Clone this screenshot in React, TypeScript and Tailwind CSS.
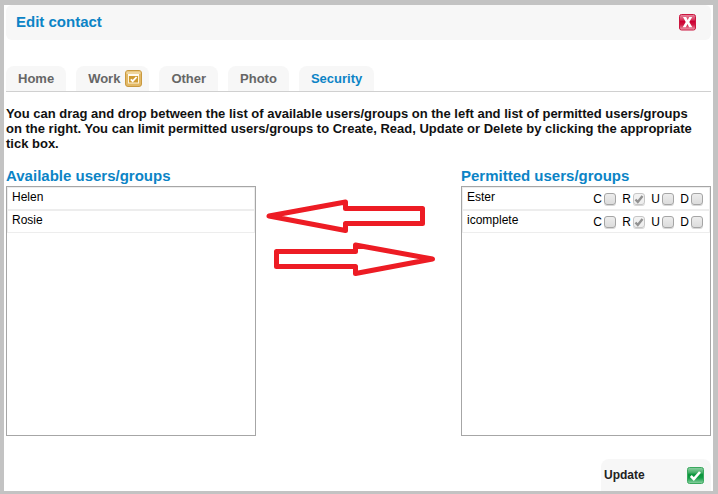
import { useState } from 'react';

const tabs = ['Home', 'Work', 'Other', 'Photo', 'Security'];

const availableUsers = ['Helen', 'Rosie'];

const permittedUsers = ['Ester', 'icomplete'];

const permissions = [
  { key: 'C', label: 'Create' },
  { key: 'R', label: 'Read' },
  { key: 'U', label: 'Update' },
  { key: 'D', label: 'Delete' },
];

function CloseIcon() {
  return (
    <svg width="17" height="17" viewBox="0 0 17 17" className="block" aria-hidden="true">
      <defs>
        <linearGradient id="close-fill" x1="0" y1="0" x2="0" y2="1">
          <stop offset="0" stopColor="#e58aa0" />
          <stop offset="0.3" stopColor="#dc4468" />
          <stop offset="0.45" stopColor="#cc0033" />
          <stop offset="0.65" stopColor="#d21541" />
          <stop offset="1" stopColor="#efa3b5" />
        </linearGradient>
      </defs>
      <rect x="0.5" y="0.5" width="16" height="15.5" rx="2" fill="url(#close-fill)" stroke="#cc1740" />
      <path d="M4 3h3.200l1.500 3 1.600-3h2.900l-2.900 5 3 5.200h-3.200L8.500 10l-1.700 3.200H3.700l3-5.200z" fill="#fff" />
    </svg>
  );
}

function UpdateIcon() {
  return (
    <svg width="17" height="17" viewBox="0 0 17 17" className="block" aria-hidden="true">
      <defs>
        <linearGradient id="update-fill" x1="0" y1="0" x2="0" y2="1">
          <stop offset="0" stopColor="#8fd0a4" />
          <stop offset="0.3" stopColor="#4bb06c" />
          <stop offset="0.45" stopColor="#08953a" />
          <stop offset="0.65" stopColor="#139d45" />
          <stop offset="1" stopColor="#90d3a6" />
        </linearGradient>
      </defs>
      <rect x="0.5" y="0.5" width="16" height="16" rx="2" fill="url(#update-fill)" stroke="#3aa85e" />
      <path d="M3.800 9l3 3L13 5" fill="none" stroke="#fff" strokeWidth="2.600" />
    </svg>
  );
}

function WorkIcon() {
  return (
    <svg width="17" height="17" viewBox="0 0 17 17" className="block" aria-hidden="true">
      <rect x="0.5" y="0.5" width="16" height="16" rx="2.5" fill="#e2b865" stroke="#c9993f" />
      <rect x="1.5" y="1.5" width="14" height="2.500" fill="#efd59c" />
      <rect x="3.5" y="4.5" width="10" height="8.5" fill="#cf9a32" stroke="#fff4d8" />
      <rect x="3" y="4" width="11" height="2" fill="#fffaf0" />
      <path d="M5.800 9.300l1.900 1.900L11.600 7" fill="none" stroke="#fff" strokeWidth="1.800" />
    </svg>
  );
}

function DragArrows() {
  return (
    <svg
      width="172"
      height="78"
      viewBox="265 198 172 78"
      fill="none"
      stroke="#ed1c24"
      strokeWidth="5"
      strokeLinejoin="round"
      aria-hidden="true"
    >
      <path d="M269 216L345.500 202V208.500H422.500V223.500H345.500V230.500Z" />
      <path d="M432.500 259L355.500 245V251.500H276.500V266.500H355.500V273.500Z" />
    </svg>
  );
}

function PermissionBox({ user, name, letter }: { user: string; name: string; letter: string }) {
  const locked = letter === 'R';
  const [checked, setChecked] = useState(locked);

  return (
    <label className="flex items-center gap-[2px]">
      <span className="w-[10px] text-right">{letter}</span>
      <span className="grid">
        <input
          type="checkbox"
          aria-label={`${name} permission for ${user}`}
          checked={checked}
          disabled={locked}
          onChange={(e) => setChecked(e.target.checked)}
          className="col-start-1 row-start-1 size-3 appearance-none rounded-[3px] border border-[#a5a5a5] bg-linear-to-b from-[#ededed] to-[#dcdcdc] shadow-[0_1px_0_#d8d8d8] disabled:border-[#c6c6c6] disabled:from-[#f3f3f3] disabled:to-[#ededed]"
        />
        {checked && (
          <svg viewBox="0 0 12 12" className="pointer-events-none col-start-1 row-start-1 size-3" aria-hidden="true">
            <path d="M2.500 6.500l2.300 2.500L9.500 3" fill="none" stroke="#929292" strokeWidth="2.400" />
          </svg>
        )}
      </span>
    </label>
  );
}

export default function App() {
  const [activeTab, setActiveTab] = useState('Security');

  return (
    <div className="flex min-h-screen flex-col border-t-5 border-r-5 border-b-3 border-l-4 border-[#c3c3c3] bg-white px-[2px] font-['Liberation_Sans',Arial,sans-serif] text-[12px] text-black">
      <header className="flex h-[35px] items-center justify-between rounded-md bg-[#f7f7f7] pr-[15px] pl-[10px]">
        <h1 className="text-[15px] font-bold text-[#0c84c6]">Edit contact</h1>
        <button type="button" aria-label="Close">
          <CloseIcon />
        </button>
      </header>

      <nav className="mt-[26px] flex gap-[10px] border-b border-[#d0d0d0]">
        {tabs.map((tab) => (
          <button
            key={tab}
            type="button"
            onClick={() => setActiveTab(tab)}
            className={`flex h-[25px] items-center gap-[5px] rounded-t-lg bg-[#f7f7f7] pl-3 text-[13px] font-bold ${
              tab === 'Work' ? 'pr-[7px]' : 'pr-3'
            } ${tab === activeTab ? 'text-[#0c84c6]' : 'text-[#666666]'}`}
          >
            {tab}
            {tab === 'Work' && <WorkIcon />}
          </button>
        ))}
      </nav>

      <p className="mt-[14px] pr-4 text-[13px] leading-[15px] font-bold text-[#111111]">
        You can drag and drop between the list of available users/groups on the left and list of permitted users/groups
        on the right. You can limit permitted users/groups to Create, Read, Update or Delete by clicking the appropriate
        tick box.
      </p>

      <main className="mt-[15px] flex justify-between">
        <section className="w-[250px]">
          <h2 className="text-[15px] leading-5 font-bold text-[#0c84c6]">Available users/groups</h2>
          <ul className="h-[250px] border border-[#a6a6a6]">
            {availableUsers.map((user) => (
              <li key={user} className="h-[23px] cursor-move border border-[#ededed] pl-1 leading-[18px]">
                {user}
              </li>
            ))}
          </ul>
        </section>

        <div className="pt-8 pr-4">
          <DragArrows />
        </div>

        <section className="w-[250px]">
          <h2 className="text-[15px] leading-5 font-bold text-[#0c84c6]">Permitted users/groups</h2>
          <ul className="h-[250px] border border-[#a6a6a6]">
            {permittedUsers.map((user) => (
              <li
                key={user}
                className="flex h-[23px] cursor-move justify-between border border-[#ededed] pr-[6px] pl-1 leading-[18px]"
              >
                {user}
                <div className="flex gap-[5px] pt-px">
                  {permissions.map((permission) => (
                    <PermissionBox key={permission.key} user={user} name={permission.label} letter={permission.key} />
                  ))}
                </div>
              </li>
            ))}
          </ul>
        </section>
      </main>

      <footer className="mt-auto flex justify-end">
        <button
          type="button"
          className="flex h-8 w-[110px] items-center justify-between rounded-t-lg bg-[#f7f7f7] pr-[7px] pl-[3px] text-[12px] font-bold text-[#222222]"
        >
          Update
          <UpdateIcon />
        </button>
      </footer>
    </div>
  );
}
